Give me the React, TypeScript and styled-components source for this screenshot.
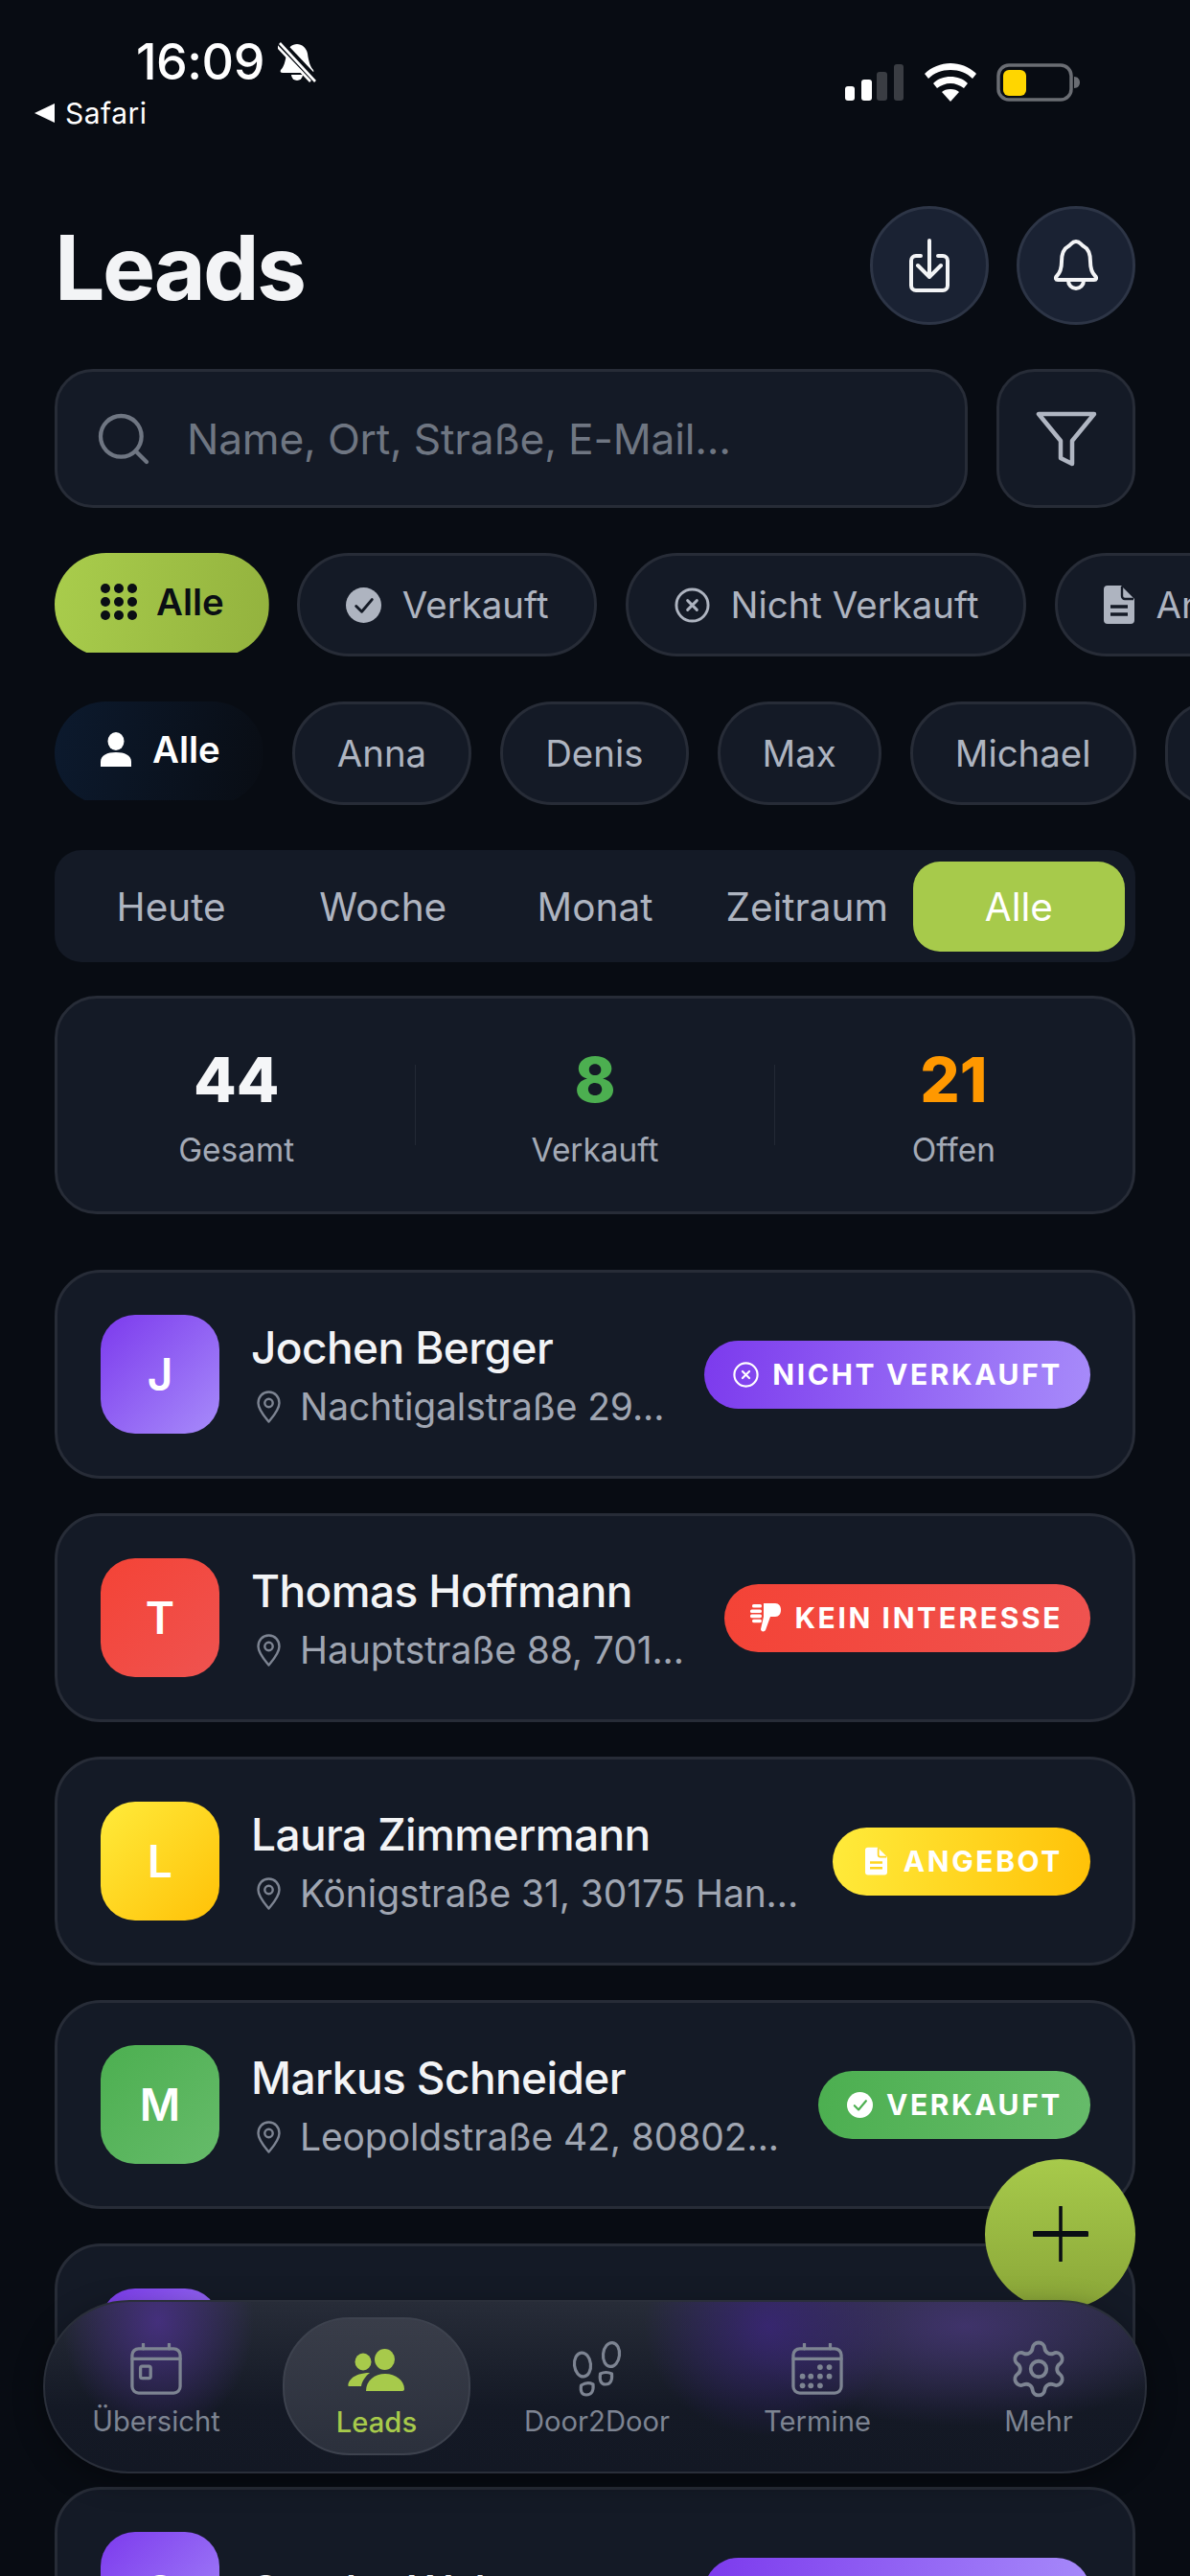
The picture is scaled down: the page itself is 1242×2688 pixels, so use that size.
import React from 'react'
import styled, { createGlobalStyle } from 'styled-components'
import { Search, Settings } from 'lucide-react'

const GlobalStyle = createGlobalStyle`
  html, body { margin: 0; padding: 0; background: #080c13; }
  * { box-sizing: border-box; }
  body { font-family: Inter, "Liberation Sans", sans-serif; }
`

const Screen = styled.div`
  position: relative;
  width: 1242px;
  height: 2688px;
  overflow: hidden;
  background: #080c13;
  color: #fff;
`

const StatusBar = styled.div`
  display: flex;
  justify-content: space-between;
  align-items: flex-start;
  height: 215px;
  padding: 36px 114px 0 36px;
`

const StatusLeft = styled.div`
  display: flex;
  flex-direction: column;
  gap: 6px;
`

const TimeRow = styled.div`
  display: flex;
  align-items: center;
  gap: 14px;
  padding-left: 106px;
  font-size: 52px;
  line-height: 58px;
  font-weight: 500;
  letter-spacing: -0.5px;
`

const BackRow = styled.div`
  display: flex;
  align-items: center;
  gap: 11px;
  font-size: 30px;
  line-height: 36px;
  font-weight: 400;
  letter-spacing: 0.5px;
`

const StatusRight = styled.div`
  display: flex;
  align-items: center;
  gap: 21px;
  padding-top: 30px;
`

const Main = styled.div`
  display: flex;
  flex-direction: column;
  padding: 0 57px;
`

const Header = styled.div`
  display: flex;
  justify-content: space-between;
  align-items: center;
  margin-bottom: 46px;
`

const Title = styled.h1`
  margin: 5px 0 0;
  font-size: 93px;
  line-height: 119px;
  font-weight: 700;
  letter-spacing: -2.6px;
  color: #f3f4f6;
`

const HeaderActions = styled.div`
  display: flex;
  gap: 29px;
`

const RoundButton = styled.div`
  display: flex;
  align-items: center;
  justify-content: center;
  width: 124px;
  height: 124px;
  border-radius: 50%;
  background: #1a2233;
  border: 3px solid #2d3546;
`

const SearchRow = styled.div`
  display: flex;
  gap: 30px;
  margin-bottom: 47px;
`

const SearchField = styled.div`
  display: flex;
  flex: 1;
  align-items: center;
  gap: 34px;
  height: 145px;
  padding: 0 37px;
  border-radius: 40px;
  background: #141a26;
  border: 3px solid #272c37;
  color: #6f7682;
  font-size: 44.3px;
  letter-spacing: -0.2px;
`

const FilterButton = styled.div`
  display: flex;
  align-items: center;
  justify-content: center;
  width: 145px;
  height: 145px;
  border-radius: 40px;
  background: #141a26;
  border: 3px solid #272c37;
`

const ChipRow = styled.div`
  display: flex;
  gap: 30px;
  margin-bottom: 47px;
  white-space: nowrap;
`

const Chip = styled.div<{ $tone?: 'lime' | 'navy'; $icon?: boolean }>`
  display: flex;
  flex: none;
  align-items: center;
  gap: 22px;
  min-width: 80px;
  height: 108px;
  padding: ${(p) => (p.$icon ? '0 47px 0 48px' : '0 44px')};
  border-radius: 54px;
  font-size: 38.4px;
  color: #aeb4c0;
  background: #141a26;
  border: 3px solid #272c37;
  ${(p) =>
    p.$tone === 'lime' &&
    `
    padding: 0 47px 7px 48px;
    border: none;
    gap: 20px;
    margin-right: -1px;
    clip-path: inset(0 0 4px 0);
    background: linear-gradient(100deg, #a9cd4c, #93b23e);
    color: #0a0e14;
    font-weight: 600;
  `}
  ${(p) =>
    p.$tone === 'navy' &&
    `
    padding: 0 45px 9px 48px;
    border: none;
    clip-path: inset(0 0 5px 0);
    background: linear-gradient(100deg, #0c1a2e, #090d14);
    color: #fff;
    font-weight: 600;
  `}
`

const Segments = styled.div`
  display: grid;
  grid-template-columns: repeat(5, 1fr);
  align-items: center;
  height: 117px;
  padding: 0 11px;
  margin-bottom: 35px;
  border-radius: 28px;
  background: #141a26;
`

const Segment = styled.div<{ $active?: boolean }>`
  display: flex;
  align-items: center;
  justify-content: center;
  height: 94px;
  padding-top: 2px;
  border-radius: 28px;
  font-size: 40.5px;
  color: ${(p) => (p.$active ? '#fff' : '#aeb4c0')};
  background: ${(p) => (p.$active ? '#a7ca4b' : 'transparent')};
  font-weight: 400;
`

const StatsCard = styled.div`
  display: grid;
  grid-template-columns: 1fr 1px 1fr 1px 1fr;
  align-items: center;
  height: 228px;
  margin-bottom: 58px;
  border-radius: 44px;
  background: #141a26;
  border: 3px solid #272c37;
`

const Stat = styled.div`
  display: flex;
  flex-direction: column;
  align-items: center;
  gap: 13px;
`

const StatValue = styled.div<{ $color: string }>`
  font-size: 65px;
  line-height: 80px;
  font-weight: 800;
  color: ${(p) => p.$color};
`

const StatLabel = styled.div`
  font-size: 33.4px;
  line-height: 40px;
  color: #a4aab6;
`

const StatDivider = styled.div`
  width: 1px;
  height: 84px;
  background: #232935;
`

const LeadList = styled.div`
  display: flex;
  flex-direction: column;
  gap: 36px;
`

const LeadCard = styled.div`
  display: flex;
  flex: none;
  align-items: center;
  height: 218px;
  padding: 0 44px 0 45px;
  border-radius: 48px;
  background: #141a26;
  border: 3px solid #272c37;
`

const Avatar = styled.div<{ $bg: string }>`
  display: flex;
  flex: none;
  align-items: center;
  justify-content: center;
  width: 124px;
  height: 124px;
  border-radius: 36px;
  background: ${(p) => p.$bg};
  font-size: 46px;
  font-weight: 600;
`

const LeadInfo = styled.div`
  display: flex;
  flex: 1;
  flex-direction: column;
  gap: 11px;
  min-width: 0;
  margin-left: 33px;
  white-space: nowrap;
`

const LeadName = styled.div`
  font-size: 46px;
  line-height: 56px;
  font-weight: 500;
  letter-spacing: -0.6px;
  color: #f3f4f6;
`

const LeadAddress = styled.div`
  display: flex;
  align-items: center;
  gap: 20px;
  font-size: 39px;
  line-height: 46px;
  color: #a0a6b2;
  letter-spacing: -0.1px;
`

const Badge = styled.div<{ $bg: string }>`
  display: flex;
  flex: none;
  align-items: center;
  gap: 14px;
  height: 71px;
  padding: 0 29px 0 30px;
  border-radius: 36px;
  background: ${(p) => p.$bg};
  font-size: 30px;
  font-weight: 700;
  letter-spacing: 2.6px;
  color: #fff;
  white-space: nowrap;
`

const BadgeIconSlot = styled.span<{ $kind: string }>`
  display: flex;
  flex: none;
  align-items: center;
  justify-content: center;
  margin: ${(p) => (p.$kind === 'offer' ? '0 3px 0 4px' : p.$kind === 'rejected' ? '0 0 0 -3px' : '0')};
`

const PinSvg = styled.svg`
  flex: none;
  margin-left: 6px;
`

const Fab = styled.div`
  position: absolute;
  left: 1028px;
  top: 2253px;
  display: flex;
  align-items: center;
  justify-content: center;
  width: 157px;
  height: 157px;
  padding-bottom: 1px;
  border-radius: 50%;
  background: linear-gradient(180deg, #a7ca4b, #8aa638);
`

const NavBar = styled.div`
  position: absolute;
  left: 45px;
  top: 2400px;
  display: grid;
  grid-template-columns: 230px 230px 230px 230px 232px;
  width: 1152px;
  height: 181px;
  padding: 16px 0 0 1px;
  border-radius: 90px;
  border: 2px solid #2a2f3a;
  background:
    radial-gradient(ellipse 100px 120px at 118px 20px, rgba(70, 48, 128, 0.95), rgba(70, 48, 128, 0)),
    radial-gradient(ellipse 130px 115px at 755px 25px, rgba(58, 38, 120, 0.85), rgba(58, 38, 120, 0)),
    radial-gradient(ellipse 240px 105px at 960px 25px, rgba(66, 52, 112, 0.9), rgba(66, 52, 112, 0)),
    linear-gradient(180deg, #272c38, #141925 62%, #131824);
  box-shadow: 0 8px 30px rgba(0, 0, 0, 0.35);
`

const NavItem = styled.div<{ $active?: boolean }>`
  display: flex;
  flex-direction: column;
  align-items: center;
  justify-content: flex-start;
  width: 196px;
  height: 144px;
  justify-self: center;
  padding-top: ${(p) => (p.$active ? '23px' : '24px')};
  border-radius: 70px;
  font-size: 29.2px;
  line-height: 34px;
  color: ${(p) => (p.$active ? '#a7ca4b' : '#7d8492')};
  font-weight: ${(p) => (p.$active ? 500 : 400)};
  ${(p) =>
    p.$active &&
    `
    background: linear-gradient(180deg, #393d49, #2b303c);
    border: 2px solid #3d424e;
  `}
`

const NavIcon = styled.div`
  display: flex;
  align-items: center;
  justify-content: center;
  height: 60px;
  margin-bottom: 8px;
`

const DownloadIcon = () => (
  <svg width="44" height="56" viewBox="0 0 44 56" fill="none" stroke="#f3f4f6" strokeWidth="4" strokeLinecap="round" strokeLinejoin="round">
    <path d="M13 18H8a5 5 0 0 0-5 5v26a5 5 0 0 0 5 5h28a5 5 0 0 0 5-5V23a5 5 0 0 0-5-5h-5" />
    <path d="M22 2v37M10 28l12 12 12-12" />
  </svg>
)

const BellIcon = () => (
  <svg width="46" height="56" viewBox="0 0 46 56" fill="none" stroke="#f3f4f6" strokeWidth="4" strokeLinecap="round" strokeLinejoin="round">
    <path d="M23 3c4 0 5 3 8 5 6 3 7 9 7 16 0 8 2 12 5 15 2 2 1 4-1 4H4c-2 0-3-2-1-4 3-3 5-7 5-15 0-7 1-13 7-16 3-2 4-5 8-5Z" />
    <path d="M15 44a8 8 0 0 0 16 0" />
  </svg>
)

const FunnelIcon = () => (
  <svg width="64" height="58" viewBox="0 0 64 58" fill="none" stroke="#b0b6c2" strokeWidth="4.5" strokeLinejoin="round">
    <path d="M3 3h58L38 31v24l-12-6V31Z" />
  </svg>
)

const MutedBell = () => (
  <svg width="40" height="42" viewBox="0 0 40 42" fill="#fff">
    <path d="M20 2c5 0 10 4 11 10 1 8 3 14 6 17 1 2 0 3-2 3H5c-2 0-3-1-2-3 3-3 5-9 6-17 1-6 6-10 11-10Z" />
    <path d="M14 34h12a6 6 0 0 1-12 0Z" />
    <path d="M2 0 40 40" stroke="#080c13" strokeWidth="8" />
    <path d="M2 1 39 41M-1 4 34 41" stroke="#fff" strokeWidth="2.6" />
  </svg>
)

const BackTriangle = () => (
  <svg width="21" height="20" viewBox="0 0 21 20" fill="#fff">
    <path d="M0 10 21 0v20Z" />
  </svg>
)

const SignalIcon = () => (
  <svg width="62" height="39" viewBox="0 0 62 39">
    <rect x="0" y="23" width="10" height="15" rx="3" fill="#fff" />
    <rect x="17" y="16" width="11" height="22" rx="3" fill="#fff" />
    <rect x="33" y="8" width="11" height="30" rx="3" fill="#3a3d43" />
    <rect x="51" y="0" width="10" height="38" rx="3" fill="#3a3d43" />
  </svg>
)

const WifiIcon = () => (
  <svg width="54" height="40" viewBox="0 0 54 40" fill="#fff">
    <path d="M27 0c10 0 20 4 27 11l-4 5C44 10 36 7 27 7S10 10 4 16l-4-5C7 4 17 0 27 0Z" />
    <path d="M27 14c7 0 13 2 18 7l-4 5c-4-3-9-5-14-5s-10 2-14 5l-4-5c5-5 11-7 18-7Z" />
    <path d="M27 27c4 0 7 1 9 3L27 40l-9-10c2-2 5-3 9-3Z" />
  </svg>
)

const BatteryIcon = () => (
  <svg width="88" height="40" viewBox="0 0 88 40" fill="none">
    <rect x="2" y="2" width="76" height="36" rx="11" stroke="#6a6d73" strokeWidth="3.5" />
    <rect x="7" y="7" width="24" height="27" rx="6" fill="#ffd600" />
    <path d="M81 14c4 0 6 3 6 6s-2 6-6 6Z" fill="#6a6d73" />
  </svg>
)

const GridDots = () => (
  <svg width="38" height="38" viewBox="0 0 38 38" fill="#0a0e14">
    {[5, 19, 33].flatMap((y) => [5, 19, 33].map((x) => <circle key={`${x}-${y}`} cx={x} cy={y} r="5" />))}
  </svg>
)

const CheckCircle = ({ size, fill, tick }: { size: number; fill: string; tick: string }) => (
  <svg width={size} height={size} viewBox="0 0 38 38">
    <circle cx="19" cy="19" r="19" fill={fill} />
    <path d="M11 20l6 6 11-13" fill="none" stroke={tick} strokeWidth="3" strokeLinecap="round" strokeLinejoin="round" />
  </svg>
)

const XCircle = ({ size, color }: { size: number; color: string }) => (
  <svg width={size} height={size} viewBox="0 0 38 38" fill="none" stroke={color} strokeWidth="3" strokeLinecap="round">
    <circle cx="19" cy="19" r="17" />
    <path d="M14 14l10 10M24 14 14 24" />
  </svg>
)

const DocIcon = ({ width, height, fill, line }: { width: number; height: number; fill: string; line: string }) => (
  <svg width={width} height={height} viewBox="0 0 32 40">
    <path d="M4 0h14l14 14v22a4 4 0 0 1-4 4H4a4 4 0 0 1-4-4V4a4 4 0 0 1 4-4Z" fill={fill} />
    <path d="M19 1v10a3 3 0 0 0 3 3h9" fill="none" stroke={line} strokeWidth="2.4" />
    <path d="M7 22h18M7 30h18" stroke={line} strokeWidth="3.4" />
  </svg>
)

const ThumbDownIcon = () => (
  <svg width="32" height="30" viewBox="0 0 32 30" fill="#fff">
    <rect x="2" y="1" width="10" height="3.6" rx="1.6" />
    <rect x="0" y="6.4" width="12" height="3.6" rx="1.6" />
    <rect x="0" y="11.6" width="12" height="3.6" rx="1.6" />
    <rect x="2" y="16.8" width="10" height="3.4" rx="1.6" />
    <path d="M14 0h12c4 0 6 3 6 7s-2 7-6 7h-5l-5 14c-1 2-5 2-5-1l3-13Z" />
  </svg>
)

const PinIcon = () => (
  <PinSvg width="25" height="34" viewBox="0 0 25 34" fill="none" stroke="#7d8492" strokeWidth="2.4" strokeLinejoin="round">
    <path d="M12.5 1.5C6 1.5 1.5 6.5 1.5 13c0 7 6.5 14 11 19.5C17 27 23.5 20 23.5 13c0-6.5-4.5-11.5-11-11.5Z" />
    <circle cx="12.5" cy="13" r="4.2" />
  </PinSvg>
)

const PersonIcon = () => (
  <svg width="32" height="36" viewBox="0 0 32 36" fill="#fff">
    <ellipse cx="16" cy="9.5" rx="8.5" ry="9.5" />
    <path d="M0 36v-5c0-7 7-10 16-10s16 3 16 10v5Z" />
  </svg>
)

const CalendarBase = ({ children }: { children: React.ReactNode }) => (
  <svg width="54" height="54" viewBox="0 0 56 56" fill="none" stroke="#7d8492" strokeWidth="3.4" strokeLinecap="round" strokeLinejoin="round">
    <rect x="2" y="6" width="52" height="48" rx="7" />
    <path d="M2 17h52M14 1v5M42 1v5" />
    {children}
  </svg>
)

const OverviewIcon = () => (
  <CalendarBase>
    <rect x="11" y="25" width="11" height="13" rx="2" />
  </CalendarBase>
)

const ScheduleIcon = () => (
  <CalendarBase>
    <g fill="#7d8492" stroke="none">
      {[
        [31, 26], [41, 26],
        [12, 36], [21, 36], [31, 36], [41, 36],
        [12, 46], [21, 46], [31, 46],
      ].map(([x, y]) => (
        <circle key={`${x}-${y}`} cx={x} cy={y} r="3" />
      ))}
    </g>
  </CalendarBase>
)

const PeopleIcon = () => (
  <svg width="60" height="45" viewBox="0 0 60 45" fill="#a7ca4b">
    <ellipse cx="16" cy="13.5" rx="8.5" ry="9" />
    <ellipse cx="38.5" cy="11" rx="10.5" ry="11" />
    <path d="M19 44c0-11 9-18 20-18s20 7 20 16c0 1-1 2-2 2Z" />
    <path d="M1 39c-2 0 0-14 22-14-4 3-8 8-9 14Z" />
  </svg>
)

const FootprintsIcon = () => (
  <svg width="54" height="60" viewBox="0 0 54 60" fill="none" stroke="#7d8492" strokeWidth="3.2" strokeLinejoin="round">
    <ellipse cx="12" cy="25.5" rx="8.5" ry="12.5" transform="rotate(-6 12 25.5)" />
    <path d="M10.5 47Q17 43 23 46q1 11-7 11-7 0-5.5-10Z" />
    <ellipse cx="42" cy="15" rx="8.5" ry="12.5" transform="rotate(6 42 15)" />
    <path d="M30.5 35q6-3 12 0 1 11-6.5 11-7 0-5.5-11Z" />
  </svg>
)

const PlusIcon = () => (
  <svg width="58" height="58" viewBox="0 0 58 58" stroke="#0a0e14" strokeLinecap="round">
    <path d="M29 1v56" strokeWidth="3.6" />
    <path d="M2 29h54" strokeWidth="6" />
  </svg>
)

const gradients = {
  purple: 'linear-gradient(135deg, #7c3aed, #a78bfa)',
  purpleBadge: 'linear-gradient(100deg, #7c3aed, #a78bfa)',
  red: 'linear-gradient(135deg, #f44336, #ef5350)',
  redBadge: 'linear-gradient(100deg, #f44336, #ef5350)',
  yellow: 'linear-gradient(135deg, #ffeb3b, #ffc107)',
  yellowBadge: 'linear-gradient(100deg, #ffeb3b, #ffc107)',
  green: 'linear-gradient(135deg, #4caf50, #66bb6a)',
  greenBadge: 'linear-gradient(100deg, #4caf50, #66bb6a)',
}

const badgeIcons: Record<string, React.ReactNode> = {
  lost: <XCircle size={27} color="#fff" />,
  rejected: <ThumbDownIcon />,
  offer: <DocIcon width={23} height={30} fill="#fff" line="#ffd51e" />,
  sold: <CheckCircle size={27} fill="#fff" tick="#4caf50" />,
}

// the fifth card sits behind the nav bar, only its avatar shows above it
const leads = [
  { id: 1, initial: 'J', name: 'Jochen Berger', address: 'Nachtigalstraße 29...', bg: gradients.purple, badgeBg: gradients.purpleBadge, status: 'NICHT VERKAUFT', icon: 'lost' },
  { id: 2, initial: 'T', name: 'Thomas Hoffmann', address: 'Hauptstraße 88, 701...', bg: gradients.red, badgeBg: gradients.redBadge, status: 'KEIN INTERESSE', icon: 'rejected' },
  { id: 3, initial: 'L', name: 'Laura Zimmermann', address: 'Königstraße 31, 30175 Han...', bg: gradients.yellow, badgeBg: gradients.yellowBadge, status: 'ANGEBOT', icon: 'offer' },
  { id: 4, initial: 'M', name: 'Markus Schneider', address: 'Leopoldstraße 42, 80802...', bg: gradients.green, badgeBg: gradients.greenBadge, status: 'VERKAUFT', icon: 'sold' },
  { id: 5, initial: '', bg: gradients.purple },
  { id: 6, initial: 'S', name: 'Sandra Weber', bg: gradients.purple, badgeBg: gradients.purpleBadge, status: 'NICHT VERKAUFT', icon: 'lost' },
]

const people = ['Anna', 'Denis', 'Max', 'Michael']
const periods = ['Heute', 'Woche', 'Monat', 'Zeitraum', 'Alle']

export default function App() {
  return (
    <Screen>
      <GlobalStyle />
      <StatusBar>
        <StatusLeft>
          <TimeRow>
            16:09
            <MutedBell />
          </TimeRow>
          <BackRow>
            <BackTriangle />
            Safari
          </BackRow>
        </StatusLeft>
        <StatusRight>
          <SignalIcon />
          <WifiIcon />
          <BatteryIcon />
        </StatusRight>
      </StatusBar>

      <Main>
        <Header>
          <Title>Leads</Title>
          <HeaderActions>
            <RoundButton>
              <DownloadIcon />
            </RoundButton>
            <RoundButton>
              <BellIcon />
            </RoundButton>
          </HeaderActions>
        </Header>

        <SearchRow>
          <SearchField>
            <Search size={64} color="#6f7682" strokeWidth={1.6} />
            Name, Ort, Straße, E-Mail...
          </SearchField>
          <FilterButton>
            <FunnelIcon />
          </FilterButton>
        </SearchRow>

        <ChipRow>
          <Chip $tone="lime">
            <GridDots />
            Alle
          </Chip>
          <Chip $icon>
            <CheckCircle size={37} fill="#aeb4c0" tick="#141a26" />
            Verkauft
          </Chip>
          <Chip $icon>
            <XCircle size={37} color="#aeb4c0" />
            Nicht Verkauft
          </Chip>
          <Chip $icon>
            <DocIcon width={32} height={40} fill="#aeb4c0" line="#141a26" />
            Angebot
          </Chip>
        </ChipRow>

        <ChipRow>
          <Chip $tone="navy">
            <PersonIcon />
            Alle
          </Chip>
          {people.map((person) => (
            <Chip key={person}>{person}</Chip>
          ))}
          <Chip />
        </ChipRow>

        <Segments>
          {periods.map((period) => (
            <Segment key={period} $active={period === 'Alle'}>
              {period}
            </Segment>
          ))}
        </Segments>

        <StatsCard>
          <Stat>
            <StatValue $color="#f5f6f8">44</StatValue>
            <StatLabel>Gesamt</StatLabel>
          </Stat>
          <StatDivider />
          <Stat>
            <StatValue $color="#4caf50">8</StatValue>
            <StatLabel>Verkauft</StatLabel>
          </Stat>
          <StatDivider />
          <Stat>
            <StatValue $color="#ff9800">21</StatValue>
            <StatLabel>Offen</StatLabel>
          </Stat>
        </StatsCard>

        <LeadList>
          {leads.map((lead) => (
            <LeadCard key={lead.id}>
              <Avatar $bg={lead.bg}>{lead.initial}</Avatar>
              <LeadInfo>
                {lead.name && <LeadName>{lead.name}</LeadName>}
                {lead.address && (
                  <LeadAddress>
                    <PinIcon />
                    {lead.address}
                  </LeadAddress>
                )}
              </LeadInfo>
              {lead.badgeBg && lead.icon && (
                <Badge $bg={lead.badgeBg}>
                  <BadgeIconSlot $kind={lead.icon}>{badgeIcons[lead.icon]}</BadgeIconSlot>
                  {lead.status}
                </Badge>
              )}
            </LeadCard>
          ))}
        </LeadList>
      </Main>

      <Fab>
        <PlusIcon />
      </Fab>

      <NavBar>
        <NavItem>
          <NavIcon>
            <OverviewIcon />
          </NavIcon>
          Übersicht
        </NavItem>
        <NavItem $active>
          <NavIcon>
            <PeopleIcon />
          </NavIcon>
          Leads
        </NavItem>
        <NavItem>
          <NavIcon>
            <FootprintsIcon />
          </NavIcon>
          Door2Door
        </NavItem>
        <NavItem>
          <NavIcon>
            <ScheduleIcon />
          </NavIcon>
          Termine
        </NavItem>
        <NavItem>
          <NavIcon>
            <Settings size={66} color="#7d8492" strokeWidth={1.4} />
          </NavIcon>
          Mehr
        </NavItem>
      </NavBar>
    </Screen>
  )
}
